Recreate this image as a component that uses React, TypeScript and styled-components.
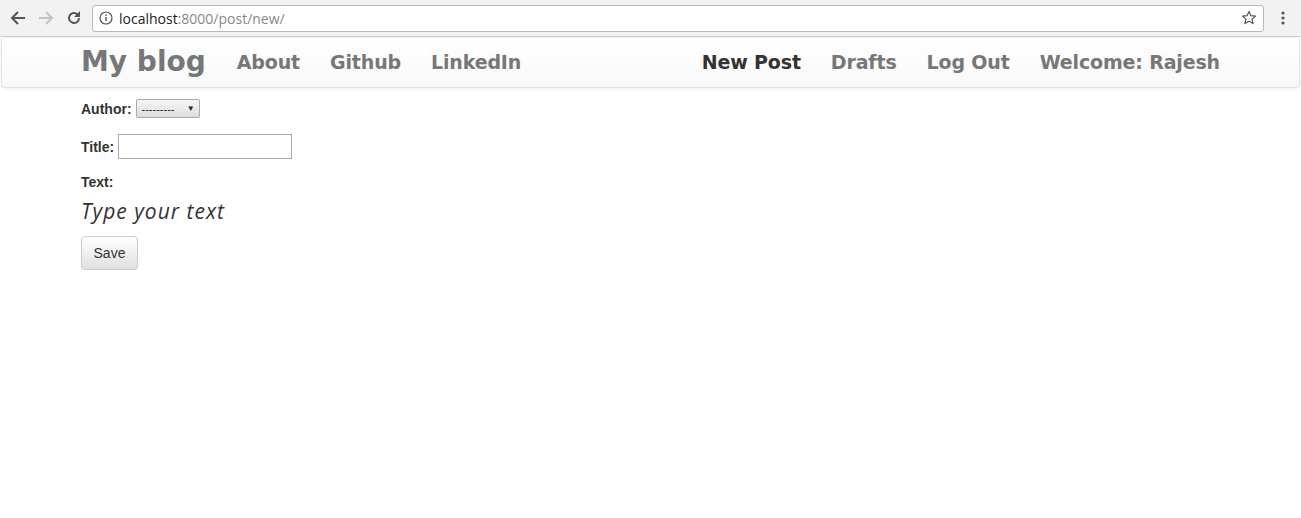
import React from 'react';
import styled, { createGlobalStyle } from 'styled-components';

const GlobalStyle = createGlobalStyle`
  html, body {
    margin: 0;
    padding: 0;
    background: #fff;
    font-family: "Liberation Sans", Arial, sans-serif;
  }
`;

const Chrome = styled.div`
  height: 36px;
  background: #f2f2f2;
  border-bottom: 1px solid #d3d3d3;
  display: flex;
  align-items: center;
  padding: 0 4px;
`;

const ChromeBtn = styled.div<{ $dim?: boolean }>`
  width: 28px;
  height: 28px;
  display: flex;
  align-items: center;
  justify-content: center;
  color: ${(p) => (p.$dim ? '#c2c2c2' : '#555')};
`;

const Omnibox = styled.div`
  flex: 1;
  height: 25px;
  margin: 0 5px 0 4px;
  border: 1px solid #b8b8b8;
  border-radius: 3px;
  background: #fff;
  display: flex;
  align-items: center;
  padding: 0 6px;
  font-family: "Open Sans", "DejaVu Sans", sans-serif;
  font-size: 14px;
`;

const Host = styled.span`
  color: #222;
  margin-left: 6px;
`;

const Path = styled.span`
  color: #888;
  flex: 1;
`;

const Navbar = styled.nav`
  margin: 0 1px;
  height: 47px;
  border: 1px solid #e3e3e3;
  border-top-color: #eee;
  border-radius: 4px;
  background: linear-gradient(#ffffff, #f8f8f8);
  box-shadow: 0 1px 4px rgba(0, 0, 0, 0.06);
  display: flex;
  align-items: center;
  padding: 0 64px 2px 79px;
`;

const Brand = styled.a`
  font-family: "DejaVu Sans", sans-serif;
  font-weight: bold;
  font-size: 28px;
  color: #777;
  text-decoration: none;
  margin-right: 16px;
`;

const NavGroup = styled.div`
  display: flex;
  align-items: center;
`;

const NavLink = styled.a<{ $active?: boolean }>`
  font-family: "DejaVu Sans", sans-serif;
  font-weight: bold;
  font-size: 19px;
  letter-spacing: -0.15px;
  color: ${(p) => (p.$active ? '#333' : '#777')};
  text-decoration: none;
  padding: 0 15px;
`;

const Spacer = styled.div`
  flex: 1;
`;

const Page = styled.main`
  padding: 11px 81px 0;
  color: #333;
  font-size: 14px;
`;

const Field = styled.div<{ $gap?: number }>`
  margin: 0 0 ${(p) => p.$gap ?? 15}px;
  display: flex;
  align-items: center;
  gap: 4px;
  line-height: 16px;
`;

const Label = styled.label`
  font-weight: bold;
  font-size: 14px;
`;

const Select = styled.div`
  width: 53px;
  height: 17px;
  border: 1px solid #a9a9a9;
  border-radius: 2px;
  background: linear-gradient(#f6f6f6, #dddddd);
  font-size: 11px;
  display: flex;
  align-items: center;
  justify-content: space-between;
  padding: 0 4px 0 5px;
  box-sizing: content-box;
  color: #222;
`;

const Caret = styled.span`
  font-size: 8px;
`;

const TextInput = styled.input`
  width: 170px;
  height: 21px;
  border: 1px solid #a9a9a9;
  padding: 1px;
  box-sizing: content-box;
  margin: 0;
`;

const Placeholder = styled.div`
  font-family: "Open Sans", Lato, sans-serif;
  font-style: italic;
  font-size: 21px;
  letter-spacing: 1px;
  line-height: 27px;
  color: #333;
  margin: 8px 0 11px;
`;

const SaveButton = styled.button`
  font-family: "Liberation Sans", Arial, sans-serif;
  font-size: 14px;
  color: #333;
  width: 57px;
  height: 34px;
  border: 1px solid #ccc;
  border-radius: 4px;
  background: linear-gradient(#ffffff, #e0e0e0);
  box-shadow: 0 1px 1px rgba(0, 0, 0, 0.08);
`;

const Back = () => (
  <svg width="16" height="16" viewBox="0 0 16 16" fill="none" stroke="currentColor" strokeWidth="2">
    <path d="M15 8H2M8 2L2 8l6 6" />
  </svg>
);

const Forward = () => (
  <svg width="16" height="16" viewBox="0 0 16 16" fill="none" stroke="currentColor" strokeWidth="2">
    <path d="M1 8h13M8 2l6 6-6 6" />
  </svg>
);

const Reload = () => (
  <svg width="16" height="16" viewBox="0 0 16 16" fill="none" stroke="currentColor" strokeWidth="2">
    <path d="M13 8a5 5 0 1 1-1.5-3.6" />
    <path d="M14 1v6H8z" fill="currentColor" stroke="none" />
  </svg>
);

const Info = () => (
  <svg width="14" height="14" viewBox="0 0 14 14">
    <circle cx="7" cy="7" r="6" fill="none" stroke="#555" strokeWidth="1.2" />
    <rect x="6.3" y="6" width="1.4" height="4.2" fill="#555" />
    <rect x="6.3" y="3.6" width="1.4" height="1.4" fill="#555" />
  </svg>
);

const Star = () => (
  <svg width="16" height="16" viewBox="0 0 16 16">
    <path
      d="M8 1.5l1.9 4.2 4.6.4-3.5 3 1.1 4.5L8 11.2l-4.1 2.4 1.1-4.5-3.5-3 4.6-.4z"
      fill="none"
      stroke="#555"
      strokeWidth="1.2"
      strokeLinejoin="round"
    />
  </svg>
);

const Dots = () => (
  <svg width="6" height="16" viewBox="0 0 6 16">
    <circle cx="3" cy="3" r="1.6" fill="#555" />
    <circle cx="3" cy="8" r="1.6" fill="#555" />
    <circle cx="3" cy="13" r="1.6" fill="#555" />
  </svg>
);

export default function App() {
  return (
    <>
      <GlobalStyle />
      <Chrome>
        <ChromeBtn><Back /></ChromeBtn>
        <ChromeBtn $dim><Forward /></ChromeBtn>
        <ChromeBtn><Reload /></ChromeBtn>
        <Omnibox>
          <Info />
          <Host>localhost</Host>
          <Path>:8000/post/new/</Path>
          <Star />
        </Omnibox>
        <ChromeBtn><Dots /></ChromeBtn>
      </Chrome>
      <Navbar>
        <Brand href="#">My blog</Brand>
        <NavGroup>
          <NavLink href="#">About</NavLink>
          <NavLink href="#">Github</NavLink>
          <NavLink href="#">LinkedIn</NavLink>
        </NavGroup>
        <Spacer />
        <NavGroup>
          <NavLink href="#" $active>New Post</NavLink>
          <NavLink href="#">Drafts</NavLink>
          <NavLink href="#">Log Out</NavLink>
          <NavLink href="#">Welcome: Rajesh</NavLink>
        </NavGroup>
      </Navbar>
      <Page>
        <Field $gap={16}>
          <Label>Author:</Label>
          <Select>
            <span>---------</span>
            <Caret>▼</Caret>
          </Select>
        </Field>
        <Field>
          <Label>Title:</Label>
          <TextInput type="text" />
        </Field>
        <Field $gap={0}>
          <Label>Text:</Label>
        </Field>
        <Placeholder>Type your text</Placeholder>
        <SaveButton>Save</SaveButton>
      </Page>
    </>
  );
}
